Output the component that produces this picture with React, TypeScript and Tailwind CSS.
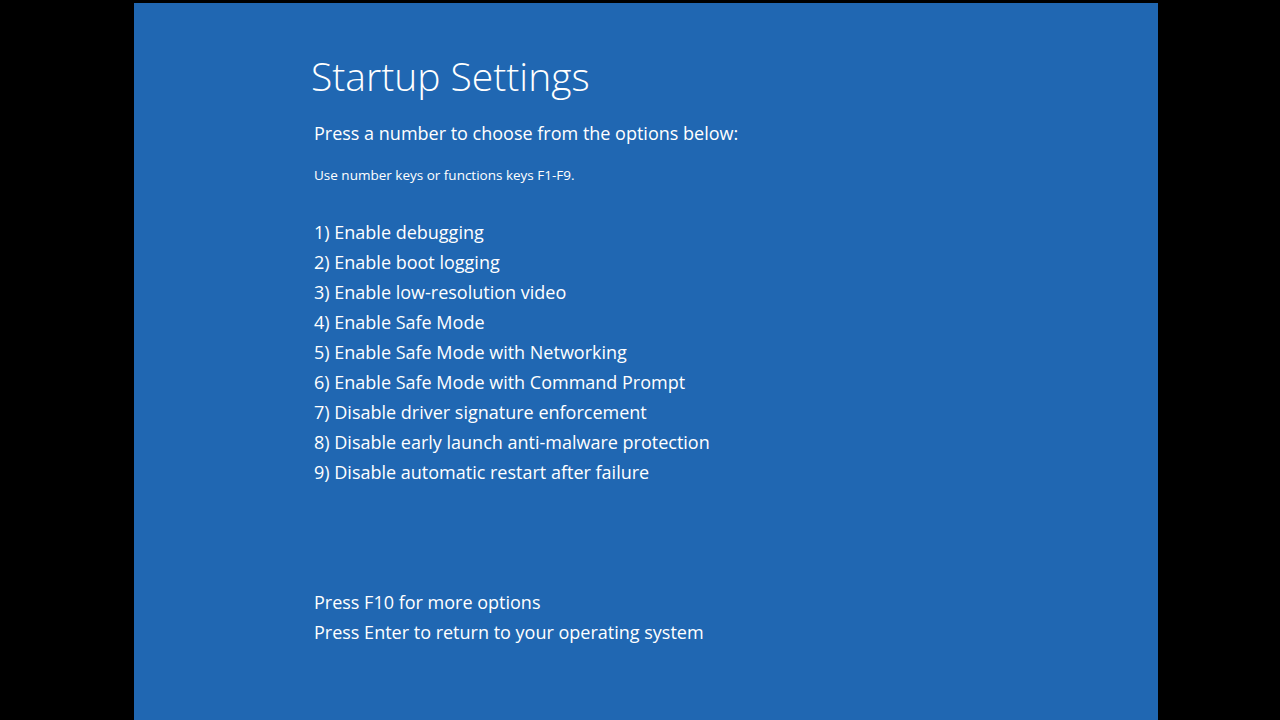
import React from "react";

const options = [
  "1) Enable debugging",
  "2) Enable boot logging",
  "3) Enable low-resolution video",
  "4) Enable Safe Mode",
  "5) Enable Safe Mode with Networking",
  "6) Enable Safe Mode with Command Prompt",
  "7) Disable driver signature enforcement",
  "8) Disable early launch anti-malware protection",
  "9) Disable automatic restart after failure",
];

export default function App() {
  return (
    <div className="h-[720px] w-[1280px] bg-black pt-[3px] pl-[134px] flex overflow-hidden">
      <div
        className="w-[1024px] h-[717px] bg-[#2067b2] text-white pl-[180px] flex flex-col"
        style={{ fontFamily: '"Open Sans", "Noto Sans", sans-serif' }}
      >
        <h1 className="mt-[49px] -ml-[3px] text-[39px] leading-[48px] font-light">Startup Settings</h1>
        <p className="mt-[18px] text-[18px] leading-[30px]">Press a number to choose from the options below:</p>
        <p className="mt-[17px] text-[13.5px] leading-[20px]">Use number keys or functions keys F1-F9.</p>
        <ul className="mt-[32px] flex flex-col">
          {options.map((o) => (
            <li key={o} className="text-[18px] leading-[30px]">
              {o}
            </li>
          ))}
        </ul>
        <div className="mt-[100px] flex flex-col">
          <p className="text-[18px] leading-[30px]">Press F10 for more options</p>
          <p className="text-[18px] leading-[30px]">Press Enter to return to your operating system</p>
        </div>
      </div>
    </div>
  );
}
